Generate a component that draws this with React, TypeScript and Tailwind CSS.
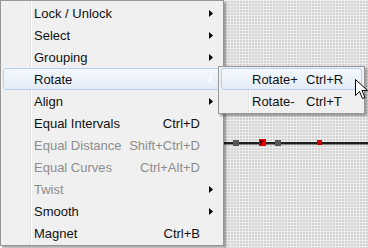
import React from 'react';

type Item = {
  label: string;
  shortcut?: string;
  submenu?: boolean;
  disabled?: boolean;
  active?: boolean;
};

const items: Item[] = [
  { label: 'Lock / Unlock', submenu: true },
  { label: 'Select', submenu: true },
  { label: 'Grouping', submenu: true },
  { label: 'Rotate', submenu: true, active: true },
  { label: 'Align', submenu: true },
  { label: 'Equal Intervals', shortcut: 'Ctrl+D' },
  { label: 'Equal Distance', shortcut: 'Shift+Ctrl+D', disabled: true },
  { label: 'Equal Curves', shortcut: 'Ctrl+Alt+D', disabled: true },
  { label: 'Twist', submenu: true, disabled: true },
  { label: 'Smooth', submenu: true },
  { label: 'Magnet', shortcut: 'Ctrl+B' },
];

function Arrow({ light }: { light?: boolean }) {
  return (
    <svg width="4" height="7" viewBox="0 0 4 7" className="block">
      <path d="M0 0 L4 3.5 L0 7 Z" fill={light ? '#ffffff' : '#000000'} />
    </svg>
  );
}

function MenuRow({ item }: { item: Item }) {
  return (
    <div
      className={`relative flex h-[22px] items-center pl-[33px] pr-[10px] ${
        item.disabled ? 'text-[#8d8d8d]' : 'text-[#101010]'
      }`}
    >
      {item.active && (
        <div className="absolute inset-y-0 left-[2px] right-[-6px] rounded-[3px] border border-[#b5cfee] bg-gradient-to-b from-[#f4f8fd] to-[#e4ecf8]" />
      )}
      <span className="relative flex-1">{item.label}</span>
      {item.shortcut && <span className="relative mr-[13px]">{item.shortcut}</span>}
      {item.submenu && (
        <span className="relative mr-[0px]">
          <Arrow light={item.active} />
        </span>
      )}
    </div>
  );
}

function Cursor() {
  return (
    <svg
      width="14"
      height="22"
      viewBox="0 0 14 22"
      className="absolute left-[355px] top-[79px]"
    >
      <path
        d="M0.5 0.5 L0.5 16.5 L4.5 12.5 L7.5 19.5 L10 18.5 L7 11.5 L12.5 11.5 Z"
        fill="#ffffff"
        stroke="#000000"
        strokeWidth="1"
      />
    </svg>
  );
}

export default function App() {
  return (
    <div
      className="relative flex h-[248px] w-[368px] overflow-hidden bg-white text-[13px] leading-none"
      style={{ fontFamily: '"Liberation Sans", Arial, sans-serif' }}
    >
      <div className="relative z-10 h-[246px] w-[224px] shrink-0 border border-[#979797] bg-[#f0f0f0] py-px shadow-[2px_2px_2px_rgba(0,0,0,0.35)]">
        <div className="absolute inset-y-0 left-[29px] w-px bg-[#e2e3e3]" />
        <div className="absolute inset-y-0 left-[30px] w-px bg-white" />
        {items.map((item) => (
          <MenuRow key={item.label} item={item} />
        ))}
      </div>

      <div className="relative flex-1 bg-[#d3d3d3] bg-[linear-gradient(to_right,#ececec_1px,transparent_1px),linear-gradient(to_bottom,#ececec_1px,transparent_1px)] bg-[length:3px_3px]">
        <svg width="144" height="248" className="absolute left-0 top-0">
          <rect x="0" y="142" width="144" height="2.5" fill="#1e1e1e" />
          <rect x="9" y="140" width="6" height="6" fill="#555555" />
          <rect x="35" y="139" width="7" height="7" fill="#ee0000" />
          <path d="M37 145 L37 141 L40 141" stroke="#000" strokeWidth="1.2" fill="none" />
          <rect x="51" y="140" width="6" height="6" fill="#555555" />
          <rect x="93" y="140" width="5" height="5" fill="#cc0000" />
        </svg>
      </div>

      <div className="absolute left-[218px] top-[66px] z-20 w-[147px] border border-[#979797] bg-[#f0f0f0] py-px shadow-[2px_2px_2px_rgba(0,0,0,0.35)]">
        <div className="absolute inset-y-0 left-[29px] w-px bg-[#e2e3e3]" />
        <div className="absolute inset-y-0 left-[30px] w-px bg-white" />
        <div className="relative flex h-[22px] items-center pl-[33px] text-[#101010]">
          <div className="absolute inset-y-0 left-[2px] right-[2px] rounded-[3px] border border-[#b5cfee] bg-gradient-to-b from-[#f4f8fd] to-[#e4ecf8]" />
          <span className="relative w-[54px]">Rotate+</span>
          <span className="relative">Ctrl+R</span>
        </div>
        <div className="relative flex h-[22px] items-center pl-[33px] text-[#101010]">
          <span className="relative w-[54px]">Rotate-</span>
          <span className="relative">Ctrl+T</span>
        </div>
      </div>

      <div className="z-30">
        <Cursor />
      </div>
    </div>
  );
}
